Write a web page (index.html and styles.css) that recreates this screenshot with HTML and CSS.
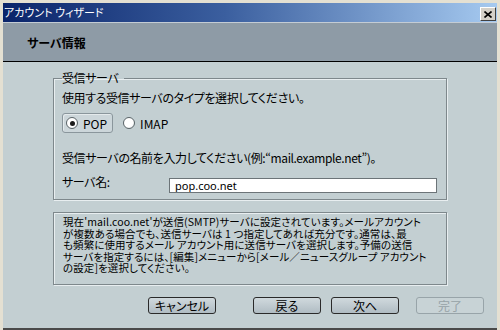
FILE: index.html
```html
<!DOCTYPE html>
<html lang="ja">
<head>
    <meta charset="UTF-8">
    <title>アカウント ウィザード</title>
    <link rel="stylesheet" href="styles.css">
</head>
<body>
    <div class="window">
        <!-- Barra de título -->
        <div class="titlebar">
            <span class="title">アカウント ウィザード</span>
            <button class="close" aria-label="閉じる">
                <svg width="8" height="7" viewBox="0 0 8 7">
                    <path d="M0.5 0.5 L7.5 6.5 M7.5 0.5 L0.5 6.5" stroke="#000" stroke-width="1.6" fill="none"/>
                </svg>
            </button>
        </div>

        <div class="header">
            <h1>サーバ情報</h1>
        </div>

        <div class="content">
            <fieldset class="group">
                <legend>受信サーバ</legend>
                <p class="line">使用する受信サーバのタイプを選択してください。</p>
                <div class="radios">
                    <label class="radio-item focused"><span class="radio checked"></span>POP</label>
                    <label class="radio-item"><span class="radio"></span>IMAP</label>
                </div>
                <p class="line gap">受信サーバの名前を入力してください(例:“mail.example.net”)。</p>
                <div class="field">
                    <label class="field-label">サーバ名:</label>
                    <input class="text-input" type="text" value="pop.coo.net">
                </div>
            </fieldset>

            <div class="info">
                現在'mail.coo.net'が送信(SMTP)サーバに設定されています。メールアカウント<br>
                が複数ある場合でも、送信サーバは 1 つ指定してあれば充分です。通常は、最<br>
                も頻繁に使用するメール アカウント用に送信サーバを選択します。予備の送信<br>
                サーバを指定するには、[編集]メニューから[メール／ニュースグループ アカウント<br>
                の設定]を選択してください。
            </div>

            <div class="buttons">
                <button class="btn btn-cancel">キャンセル</button>
                <button class="btn btn-back">戻る</button>
                <button class="btn btn-next">次へ</button>
                <button class="btn btn-finish" disabled>完了</button>
            </div>
        </div>
    </div>
</body>
</html>
```

FILE: styles.css
```css
body {
    margin: 0;
    font-family: "Noto Sans CJK JP", "Noto Sans", sans-serif;
    font-size: 12px;
    font-feature-settings: "palt";
    color: #000;
}

/* Marco de la ventana */
.window {
    width: 500px;
    height: 330px;
    box-sizing: border-box;
    padding: 3px 3px 0;
    background: #e4e0d2;
    display: flex;
    flex-direction: column;
}

.titlebar {
    height: 19px;
    flex-shrink: 0;
    background: linear-gradient(to right, #0a246a, #3b5f9f 45%, #a6caf0);
    color: #fff;
    display: flex;
    align-items: center;
    justify-content: space-between;
    padding: 0 1px 0 1px;
}

.title {
    font-size: 11px;
    line-height: 19px;
}

.close {
    width: 16px;
    height: 14px;
    padding: 0;
    margin-top: 3px;
    background: #d4d0c8;
    border: 1px solid;
    border-color: #fff #404040 #404040 #fff;
    display: flex;
    align-items: center;
    justify-content: center;
}

.header {
    height: 38px;
    flex-shrink: 0;
    border-top: 1px solid #c4ccd4;
    border-bottom: 1px solid #000;
    background: #8e9ba6;
    padding-left: 24px;
    display: flex;
    align-items: center;
}

.header h1 {
    margin: 0;
    font-size: 12px;
    font-weight: bold;
}

.content {
    flex: 1;
    background: #c3cfd2;
    border-bottom: 2px solid #4a4a4a;
    display: flex;
    flex-direction: column;
}

/* Grupo "受信サーバ" */
.group {
    margin: 10px 50px 0;
    padding: 7px 8px 6px;
    border: 1px solid #7e888c;
    box-shadow: inset 1px 1px 0 #e8eef0, 1px 1px 0 #e8eef0;
    letter-spacing: -0.4px;
}

.group legend {
    padding: 0 6px 0 0;
    line-height: 12px;
}

.line {
    margin: 0;
    line-height: 14px;
}

.line.gap {
    margin-top: 18px;
}

.radios {
    display: flex;
    margin-top: 8px;
    height: 20px;
}

.radio-item {
    display: flex;
    align-items: center;
    padding: 0 5px 0 3px;
    border: 1px solid transparent;
    border-radius: 3px;
    letter-spacing: 0;
}

.radio-item.focused {
    border-color: #8a969c;
    background: #ccd6da;
    box-shadow: inset 1px 1px 0 #e4eaec;
    margin-right: 6px;
}

.radio {
    width: 12px;
    height: 12px;
    box-sizing: border-box;
    border-radius: 50%;
    border: 1px solid #5a6468;
    background: radial-gradient(circle at 40% 40%, #fff 55%, #d8dee0);
    margin-right: 5px;
    position: relative;
}

.radio.checked::after {
    content: "";
    position: absolute;
    left: 2.5px;
    top: 2.5px;
    width: 5px;
    height: 5px;
    border-radius: 50%;
    background: #1a1a1a;
}

.field {
    display: flex;
    align-items: flex-start;
    margin-top: 11px;
}

.field-label {
    width: 107px;
    line-height: 12px;
}

.text-input {
    width: 268px;
    height: 15px;
    box-sizing: border-box;
    margin: 2px 0 0;
    padding: 0 5px;
    border: 1px solid #6c7478;
    background: #fff;
    font: inherit;
    font-family: "Noto Sans", "Noto Sans CJK JP", sans-serif;
    font-size: 11px;
    line-height: 13px;
    letter-spacing: 0;
}

/* Texto informativo */
.info {
    margin: 12px 50px 0;
    height: 73px;
    box-sizing: border-box;
    padding: 3px 0 0 9px;
    border: 1px solid #7e888c;
    box-shadow: inset 1px 1px 0 #e8eef0, 1px 1px 0 #e8eef0;
    font-size: 10.5px;
    letter-spacing: 0.1px;
    line-height: 11.5px;
    white-space: nowrap;
}

/* Botones */
.buttons {
    display: flex;
    margin-top: 12px;
}

.btn {
    width: 68px;
    height: 17px;
    padding: 0;
    border: 1px solid #2a2a2a;
    border-radius: 3px;
    background: linear-gradient(#d0d9dd, #b0bcc3);
    font: inherit;
    line-height: 15px;
    color: #000;
}

.btn-cancel {
    margin-left: 145px;
}

.btn-back {
    margin-left: 37px;
}

.btn-next {
    margin-left: 10px;
}

.btn-finish {
    margin-left: 17px;
    border-color: #98a4a9;
    background: #c8d3d6;
    color: #96a2a6;
}
```
